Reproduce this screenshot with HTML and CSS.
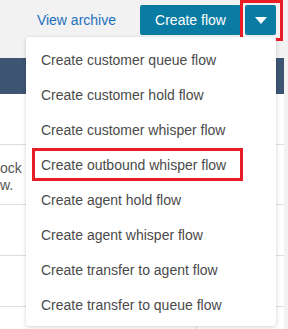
FILE: index.html
```html
<!doctype html>
<html>
  <head>
    <meta charset="utf-8">
    <title>Flows</title>
    <link rel="stylesheet" href="styles.css">
  </head>
  <body>
    <div class="toolbar">
      <a class="archive" href="#">View archive</a>
      <div class="split">
        <button class="create">Create flow</button>
        <button class="caret">
          <svg width="12" height="7" viewBox="0 0 12 7"><path d="M0 0h12L6 7z" fill="#fff"/></svg>
          <span class="mark"></span>
        </button>
        <ul class="menu">
          <li>Create customer queue flow</li>
          <li>Create customer hold flow</li>
          <li>Create customer whisper flow</li>
          <li class="picked">Create outbound whisper flow<span class="mark"></span></li>
          <li>Create agent hold flow</li>
          <li>Create agent whisper flow</li>
          <li>Create transfer to agent flow</li>
          <li>Create transfer to queue flow</li>
        </ul>
      </div>
    </div>
    <div class="panel">
      <div class="thead"></div>
      <div class="row first"></div>
      <div class="row desc">ock <a href="#">n</a><br>w.</div>
      <div class="row"></div>
      <div class="row"></div>
      <div class="row last"><span class="col"></span></div>
    </div>
  </body>
</html>
```

FILE: styles.css
```css
body {
  margin: 0;
  height: 329px;
  background: #f2f2f2;
  font-family: "Liberation Sans", Arial, sans-serif;
  font-size: 14px;
  color: #444;
  overflow: hidden;
}

.toolbar {
  height: 58px;
  display: flex;
  justify-content: flex-end;
  align-items: flex-start;
  padding-right: 12px;
  gap: 24px;
}

.archive {
  margin-top: 12px;
  color: #1f6fbf;
  text-decoration: none;
}

.split {
  position: relative;
  display: flex;
  gap: 4px;
  margin-top: 5px;
}

.split button {
  border: 0;
  height: 30px;
  background: #0a7ca3;
  color: #fff;
  font-family: inherit;
  font-size: 14px;
  border-radius: 2px;
  padding: 0;
}

.create {
  width: 101px;
}

.caret {
  position: relative;
  width: 31px;
  display: flex;
  align-items: center;
  justify-content: center;
}

.caret .mark {
  position: absolute;
  left: -5px;
  top: -5px;
  right: -7px;
  bottom: -6px;
  border: 3px solid #ea1c25;
}

.menu {
  position: absolute;
  top: 32px;
  right: 0;
  width: 250px;
  margin: 0;
  padding: 6px 0 3px;
  list-style: none;
  background: #fff;
  border-radius: 3px;
  box-shadow: 0 1px 4px rgba(0, 0, 0, 0.18);
  z-index: 2;
}

.menu li {
  position: relative;
  height: 35px;
  line-height: 35px;
  padding-left: 15px;
  color: #4a4a4a;
}

.menu .mark {
  position: absolute;
  left: 6px;
  top: 0;
  width: 211px;
  height: 33px;
  box-sizing: border-box;
  border: 3px solid #ea1c25;
}

.panel {
  width: 284px;
  background: #fff;
}

.thead {
  height: 36px;
  background: #3d5573;
}

.row {
  height: 50px;
  border-bottom: 1px solid #ddd;
}

.row.desc {
  height: 44px;
  padding-top: 15px;
  line-height: 17px;
  color: #555;
}

.row.desc a {
  color: #1f6fbf;
  text-decoration: none;
}

.row.last {
  height: 30px;
  display: flex;
  padding-left: 196px;
}

.col {
  border-left: 1px solid #ddd;
}
```
